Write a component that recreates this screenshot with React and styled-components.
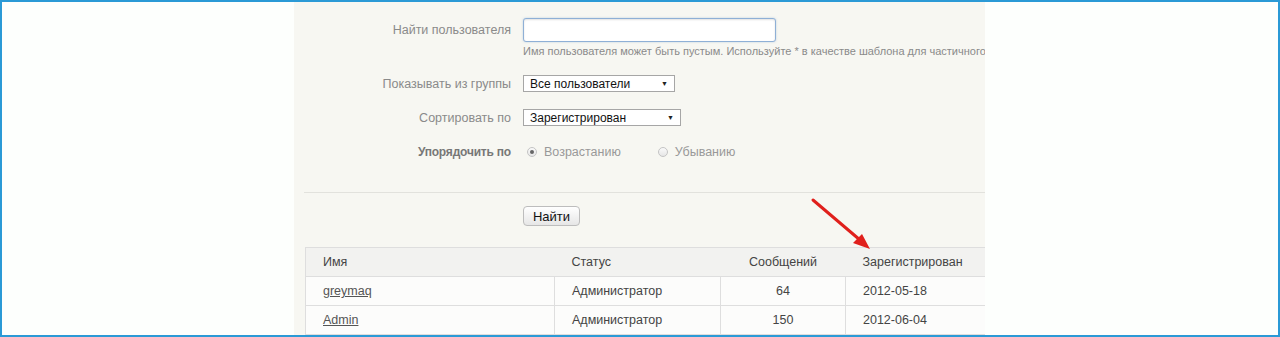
import React from 'react';
import styled, { createGlobalStyle } from 'styled-components';

const GlobalStyle = createGlobalStyle`
  html, body {
    margin: 0;
    padding: 0;
    background: #fdfffd;
  }
  * {
    box-sizing: border-box;
  }
`;

const Frame = styled.div`
  width: 1280px;
  height: 337px;
  border: 2px solid #2b9ad6;
  padding-left: 292px;
  background: #fdfffd;
  font-family: 'Liberation Sans', Arial, sans-serif;
  overflow: hidden;
`;

const Panel = styled.div`
  position: relative;
  width: 691px;
  height: 100%;
  background: #f7f7f2;
  overflow: hidden;
  padding-top: 16px;
`;

const FormRow = styled.div`
  display: grid;
  grid-template-columns: 217px 1fr;
  column-gap: 12px;
  align-items: center;
  margin-top: ${(p) => p.$top || 0}px;
  height: ${(p) => p.$height || 24}px;
`;

const Label = styled.label`
  text-align: right;
  font-size: ${(p) => (p.$bold ? '12px' : '12.5px')};
  color: ${(p) => (p.$bold ? '#777' : '#8a8a8a')};
  font-weight: ${(p) => (p.$bold ? 'bold' : 'normal')};
  letter-spacing: ${(p) => (p.$bold ? '-0.2px' : '0')};
  white-space: nowrap;
`;

const TextInput = styled.input`
  width: 253px;
  height: 24px;
  border: 1px solid #8fb0d6;
  border-radius: 3px;
  background: #fff;
  box-shadow: inset 0 1px 2px rgba(0, 0, 0, 0.12), 0 0 2px rgba(120, 160, 210, 0.5);
  outline: none;
`;

const Hint = styled.div`
  padding-left: 229px;
  margin-top: 3px;
  font-size: 11px;
  color: #8a8a8a;
  white-space: nowrap;
`;

const Select = styled.div`
  display: flex;
  align-items: center;
  justify-content: space-between;
  width: ${(p) => p.$width}px;
  height: 17px;
  padding: 0 6px 0 6px;
  border: 1px solid #a6a6a6;
  background: #fff;
  font-size: 12px;
  color: #111;
`;

const Caret = styled.span`
  font-size: 7px;
  color: #222;
`;

const Radios = styled.div`
  display: flex;
  align-items: center;
  padding-left: 4px;
`;

const RadioItem = styled.span`
  display: inline-flex;
  align-items: center;
  gap: 7px;
  margin-right: 37px;
  font-size: 12.5px;
  color: #999;
`;

const RadioDot = styled.span`
  position: relative;
  width: 10px;
  height: 10px;
  border-radius: 50%;
  border: 1px solid #c4c4c4;
  background: linear-gradient(#fafafa, #e6e6e6);
  &::after {
    content: '';
    display: ${(p) => (p.$checked ? 'block' : 'none')};
    position: absolute;
    left: 2px;
    top: 2px;
    width: 4px;
    height: 4px;
    border-radius: 50%;
    background: #666;
  }
`;

const Divider = styled.hr`
  margin: 32px 0 0 10px;
  border: 0;
  border-top: 1px solid #e2e2dd;
`;

const ButtonRow = styled.div`
  padding-left: 229px;
  margin-top: 13px;
`;

const Button = styled.button`
  width: 57px;
  height: 20px;
  padding: 0;
  border: 1px solid #bdbdbd;
  border-radius: 4px;
  background: linear-gradient(#ffffff, #e6e6e6);
  font-family: 'Liberation Sans', Arial, sans-serif;
  font-size: 13px;
  color: #111;
`;

const Table = styled.table`
  margin: 21px 0 0 11px;
  width: 700px;
  border-collapse: collapse;
  table-layout: fixed;
  font-size: 12.5px;
`;

const Th = styled.th`
  height: 29px;
  padding: 0 17px;
  background: #f2f2f0;
  border-top: 1px solid #dedede;
  border-bottom: 1px solid #dedede;
  border-left: ${(p) => (p.$first ? '1px solid #dedede' : '0')};
  font-weight: normal;
  color: #444;
  text-align: ${(p) => p.$align || 'left'};
`;

const Td = styled.td`
  height: 29px;
  padding: 0 17px;
  background: #fcfcfb;
  border: 1px solid #dedede;
  color: #444;
  text-align: ${(p) => p.$align || 'left'};
`;

const UserLink = styled.a`
  color: #555;
  text-decoration: underline;
`;

const Arrow = styled.svg`
  position: absolute;
  left: 516px;
  top: 194px;
`;

const users = [
  { name: 'greymaq', status: 'Администратор', posts: 64, date: '2012-05-18' },
  { name: 'Admin', status: 'Администратор', posts: 150, date: '2012-06-04' },
];

const App = () => (
  <>
    <GlobalStyle />
    <Frame>
      <Panel>
        <FormRow>
          <Label>Найти пользователя</Label>
          <TextInput type="text" />
        </FormRow>
        <Hint>
          Имя пользователя может быть пустым. Используйте * в качестве шаблона для частичного совпадения.
        </Hint>
        <FormRow $top={18} $height={17}>
          <Label>Показывать из группы</Label>
          <Select $width={152}>
            Все пользователи
            <Caret>▼</Caret>
          </Select>
        </FormRow>
        <FormRow $top={17} $height={17}>
          <Label>Сортировать по</Label>
          <Select $width={158}>
            Зарегистрирован
            <Caret>▼</Caret>
          </Select>
        </FormRow>
        <FormRow $top={17} $height={17}>
          <Label $bold>Упорядочить по</Label>
          <Radios>
            <RadioItem>
              <RadioDot $checked />
              Возрастанию
            </RadioItem>
            <RadioItem>
              <RadioDot />
              Убыванию
            </RadioItem>
          </Radios>
        </FormRow>
        <Divider />
        <ButtonRow>
          <Button type="button">Найти</Button>
        </ButtonRow>
        <Table>
          <colgroup>
            <col style={{ width: 249 }} />
            <col style={{ width: 166 }} />
            <col style={{ width: 125 }} />
            <col style={{ width: 160 }} />
          </colgroup>
          <thead>
            <tr>
              <Th $first>Имя</Th>
              <Th>Статус</Th>
              <Th $align="center">Сообщений</Th>
              <Th>Зарегистрирован</Th>
            </tr>
          </thead>
          <tbody>
            {users.map((u) => (
              <tr key={u.name}>
                <Td>
                  <UserLink href="#">{u.name}</UserLink>
                </Td>
                <Td>{u.status}</Td>
                <Td $align="center">{u.posts}</Td>
                <Td>{u.date}</Td>
              </tr>
            ))}
          </tbody>
        </Table>
        <Arrow width="64" height="56" viewBox="0 0 64 56">
          <line x1="3" y1="4" x2="50" y2="44" stroke="#e0201c" strokeWidth="3" strokeLinecap="round" />
          <polygon points="60,53 43,47 52,38" fill="#e0201c" />
        </Arrow>
      </Panel>
    </Frame>
  </>
);

export default App;
